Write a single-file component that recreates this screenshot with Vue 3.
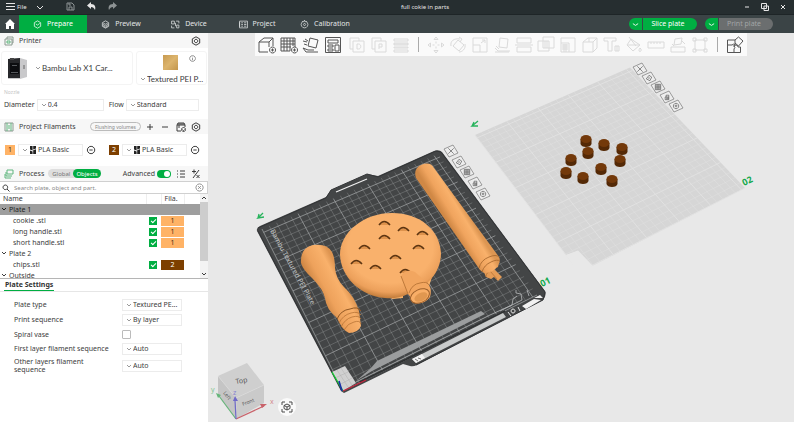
<script setup>
import { ref } from 'vue'

const tabs = [
  { name: 'Prepare', icon: 'M8 1.5l5.6 3.2v6.6L8 14.5l-5.6-3.2V4.7zM5 7l3 2 4-3' },
  { name: 'Preview', icon: 'M8 1.5l5.6 3.2v6.6L8 14.5l-5.6-3.2V4.7zM3 7.5l5 3 5-3M3 10l5 3 5-3M4 5.5l4 2 4-2' },
  { name: 'Device', icon: 'M1 2h5v5H1zM9 2h5v4M10 9h4v5h-4zM1 10v4h5M8 5v6' },
  { name: 'Project', icon: 'M1 2h14v12H1zM4 5h3M4 8h3M4 11h3M9 5h4M9 8h4M9 11h4M1 4v8' },
  { name: 'Calibration', icon: 'M8 2a6 6 0 1 0 .1 0zM8 6a2 2 0 1 0 .1 0zM8 0v2M4 2l1 2M12 2l-1 2' }
]
const activeTab = ref('Prepare')

const mainTools = [
  { name: 'Add', d: 'M1 6l5-4h9l-4 4zM1 6v10h9M11 6v5M15 2v8M14.500 11a3 3 0 1 0 .1 0zM14.500 12.500v3M13 14h3' },
  { name: 'Add plate', d: 'M1 2h14v9M1 2v13h9M1 5h14M1 8h14M1 11h10M4 2v13M7 2v13M10 2v13M13 2v8M14.500 11a3 3 0 1 0 .1 0zM14.500 12.500v3M13 14h3' },
  { name: 'Auto orient', d: 'M8 2l8 2-2 8-8-2zM1 5l4 1M2 8l3 1M1 12l3 4h12M1 12l5 2 6 0M3 3l3 2' },
  { name: 'Arrange', d: 'M1.500 1.500h15v15h-15zM4 4h10v3H4zM4 9h5v2H4zM4 13h5v2H4zM11 9h4v6h-4z' }
]
const splitTools = [
  { name: 'Split objects', d: 'M2 2h9v3M2 2v11h3M5 5h11v11H5zM9 8v5h1.500c3 0 3-5 0-5z' },
  { name: 'Split parts', d: 'M2 2h9v3M2 2v11h3M5 5h11v11H5zM9 13V8h3v3H9' },
  { name: 'Variable layer height', d: 'M2 3h14v2H2zM2 7h14v2H2zM2 8h14M2 11h14v1H2zM2 14h14v2H2z' }
]
const editTools = [
  { name: 'Move', d: 'M9 1l2 2.500H7zM9 17l-2-2.500h4zM1 9l2.500-2v4zM17 9l-2.500 2V7zM9 5.500v2M9 10.500v2M5.500 9h2M10.500 9h2' },
  { name: 'Rotate', d: 'M9 4l6 5-5 6-6-5zM2 10C1 5 5 2 11 3M10 1l3 2-2 3M16 8c1 5-3 8-6 8' },
  { name: 'Scale', d: 'M2 2h14v14H2zM2 9h7v7M10 7l4-3M11 4h3v3' },
  { name: 'Place on face', d: 'M7 2l8 1-1 9-8-1zM2 12l3 3h12M2 16h14M3 10l3 3' },
  { name: 'Cut', d: 'M2 2h14v5H2zM2 11h14v5H2zM0 9h18' },
  { name: 'Mesh boolean', d: 'M1 5h11v10H1zM6 1h11v11H6zM8 5v7M10 5v7' },
  { name: 'Fill', d: 'M2 2h14v14H2zM2 7h8v9M3 9h6M3 11h6M3 13h6M5 8v8M7 8v8' },
  { name: 'Seam painting', d: 'M2 6l5-4h9l-4 4zM2 6v10h10V6M16 2v10l-4 4M8 2v4' },
  { name: 'Text', d: 'M1 2h12v3H9v10H5V5H1zM12 10h4v5h-4zM14 10v5' },
  { name: 'Color painting', d: 'M6 3l9 6-7 6-6-6zM4 1l7 9M3 9h11M15 12c-3 4 2 5 1 1z' },
  { name: 'Measure', d: 'M1 6h16v6H1zM4 6v2M7 6v2M10 6v2M13 6v2' },
  { name: 'Support painting', d: 'M6 3l7-1-1 6-7 1zM2 11h14v5H2zM3 8l2 2M13 5l3 3' },
  { name: 'Assembly', d: 'M4 4h10v10H4zM2 2h3v3H2zM13 2h3v3h-3zM2 13h3v3H2zM13 13h3v3h-3z' }
]
const assembleTool = { name: 'Assembly view', d: 'M1.500 4H9v5a2 2 0 0 0-3 0H1.500zM1.500 9v7.500H8V13a2 2 0 0 0 0-3V9M8 16.500h6.500V11H12a2 2 0 0 0-4 0M12.500 1l4.500 4-4.500 5L9 7M12.500 1L9 4' }

const filaments = [
  { id: 1, color: '#ffb366', text: '#4a3018', name: 'PLA Basic' },
  { id: 2, color: '#7d3f00', text: '#ffffff', name: 'PLA Basic' }
]

const rows = ref([
  { label: 'Plate 1', group: true, selected: true },
  { label: 'cookie .stl', on: true, fil: 1 },
  { label: 'long handle.stl', on: true, fil: 1 },
  { label: 'short handle.stl', on: true, fil: 1 },
  { label: 'Plate 2', group: true },
  { label: 'chips.stl', on: true, fil: 2 },
  { label: 'Outside', group: true }
])
const advanced = ref(true)
const spiral = ref(false)

/* Maps the unit square onto a quad given as origin, x end, far corner, y end. */
function projector([p0, p1, p2, p3]) {
  const dx1 = p1[0] - p2[0], dx2 = p3[0] - p2[0], sx = p0[0] - p1[0] + p2[0] - p3[0]
  const dy1 = p1[1] - p2[1], dy2 = p3[1] - p2[1], sy = p0[1] - p1[1] + p2[1] - p3[1]
  const den = dx1 * dy2 - dx2 * dy1
  const g = (sx * dy2 - dx2 * sy) / den
  const h = (dx1 * sy - sx * dy1) / den
  const a = p1[0] - p0[0] + g * p1[0], b = p3[0] - p0[0] + h * p3[0]
  const d = p1[1] - p0[1] + g * p1[1], e = p3[1] - p0[1] + h * p3[1]
  return (u, v) => {
    const w = g * u + h * v + 1
    return ((a * u + b * v + p0[0]) / w).toFixed(2) + ' ' + ((d * u + e * v + p0[1]) / w).toFixed(2)
  }
}
const BED = 256
function gridPath(quad, bold) {
  const at = projector(quad)
  let path = ''
  for (let mm = 0; mm <= 250; mm += 10) {
    if ((mm % 50 === 0) !== bold) continue
    const t = mm / BED
    path += `M${at(t, 0)}L${at(t, 1)}M${at(0, t)}L${at(1, t)}`
  }
  return path
}
const quad1 = [[343, 391], [537, 295], [438, 154], [262, 229]]
const quad2 = [[579, 272], [745, 188], [630, 68], [475, 135]]
const grids = [
  { thin: gridPath(quad1, false), bold: gridPath(quad1, true) },
  { thin: gridPath(quad2, false), bold: gridPath(quad2, true) }
]
const holes = [[384, 224], [403, 230], [422, 234], [384, 238], [364, 248], [418, 248], [395, 258], [356, 263], [375, 268], [405, 272]]
const chips = [[586, 141], [604, 145], [622, 149], [588, 153], [571, 160], [620, 161], [601, 169], [566, 173], [583, 178], [612, 181]]
const glyphs = ['M-3-3L3 3M3-3L-3 3', 'M-3 1L0-3 3-1 1 3zM-1 0h2', 'M-3-3h6v6h-6zM-3-1h6M-3 1h6M-1-3v6M1-3v6', 'M-2 0h4v3h-4zM-1 0v-2h3v2M-1 1h3M-1 2h3', 'M0-3a3 3 0 1 0 .1 0zM0-1a1 1 0 1 0 .1 0z']
const spots = [
  [[451, 151], [459, 162], [467, 172], [475, 183], [483, 194]],
  [[640, 69], [649, 78], [658, 87], [667, 97], [676, 106]]
]
</script>

<template>
  <div class="app">
    <header class="titlebar">
      <div class="tb-left">
        <button class="file-btn"><svg class="i9" viewBox="0 0 9 9"><path d="M0 1.500h9M0 4.500h9M0 7.500h9" /></svg>File</button>
        <button aria-label="File menu"><svg class="i8" viewBox="0 0 8 8"><path d="M1 3l3 3 3-3" /></svg></button>
        <button class="save dim" aria-label="Save"><svg class="i9" viewBox="0 0 9 9"><path d="M1 1h5l2 2v5H1zM3 8V5h3v3M3 1v2h2" /></svg></button>
        <button aria-label="Undo"><svg class="i9 solid" viewBox="0 0 9 9"><path d="M0 3.500L4 0v2c4 0 5 3 4 6-1-2-2-3-4-3v2z" /></svg></button>
        <button class="dim" aria-label="Redo"><svg class="i9 solid" viewBox="0 0 9 9"><path d="M9 3.500L5 0v2C1 2 0 5 1 8c1-2 2-3 4-3v2z" /></svg></button>
      </div>
      <h1>full cokie in parts</h1>
      <div class="tb-right">
        <button aria-label="Minimize"><svg class="i8" viewBox="0 0 8 8"><path d="M2 4h4" /></svg></button>
        <button aria-label="Restore"><svg class="i8" viewBox="0 0 8 8"><path d="M.5.5h5v5h-5zM3 3h4.500v4.500H3z" /></svg></button>
        <button aria-label="Close"><svg class="i8" viewBox="0 0 8 8"><path d="M2 2l4 4M6 2L2 6" /></svg></button>
      </div>
    </header>

    <nav class="tabbar">
      <button class="home" aria-label="Home"><svg viewBox="0 0 10 10"><path d="M5 0l5 5H9v5H6V7H4v3H1V5H0z" /></svg></button>
      <button v-for="t in tabs" :key="t.name" class="tab" :class="{ active: t.name === activeTab }" @click="activeTab = t.name">
        <svg viewBox="0 0 16 16"><path :d="t.icon" /></svg>{{ t.name }}
      </button>
      <div class="actions">
        <div class="split">
          <button class="arrow" aria-label="Slice options"><svg viewBox="0 0 8 8"><path d="M1 3l3 2 3-2" /></svg></button>
          <button class="act">Slice plate</button>
        </div>
        <div class="split">
          <button class="arrow" aria-label="Print options"><svg viewBox="0 0 8 8"><path d="M1 3l3 2 3-2" /></svg></button>
          <button class="act off">Print plate</button>
        </div>
      </div>
    </nav>

    <div class="body">
      <aside class="side">
        <div class="head">
          <svg class="hi" viewBox="0 0 10 10"><path d="M1 3h7v6H1zM3 3V1h6v6H8" /><path class="g" d="M3 5h3v2H3z" /></svg>
          <h2>Printer</h2>
          <button class="push" aria-label="Printer settings"><svg class="gear" viewBox="0 0 10 10"><path d="M5 .8l3.700 2.100v4.200L5 9.200 1.300 7.100V2.900zM5 3.300a1.700 1.700 0 1 0 .1 0z" /></svg></button>
        </div>

        <div class="cards">
          <div class="card printer">
            <svg class="machine" viewBox="0 0 20 22">
              <path d="M1 2l12-1 7 2v17l-7 2H1z" fill="#c9c9cb" /><path d="M1 2l12-1v20H1z" fill="#27282b" />
              <path d="M3 6h9v11H3z" fill="#0c0d10" /><path d="M3 1h4v2H3z" fill="#444" /><path d="M4 15h7v1H4zM5 8h5v1H5z" fill="#55585c" /><path d="M17 8v4" stroke="#666" />
            </svg>
            <span class="sel"><svg viewBox="0 0 6 6"><path d="M1 2l2 2 2-2" /></svg><select class="big" aria-label="Printer"><option>Bambu Lab X1 Car...</option></select></span>
          </div>
          <div class="card bed">
            <div class="thumb"><span class="swatch"></span><svg viewBox="0 0 8 8"><path d="M4 .7a3.300 3.300 0 1 0 .1 0zM4 3.500V6M4 2v.7" /></svg></div>
            <span class="sel"><svg viewBox="0 0 6 6"><path d="M1 2l2 2 2-2" /></svg><select class="big" aria-label="Bed type"><option>Textured PEI P...</option></select></span>
          </div>
        </div>

        <fieldset class="nozzle">
          <legend>Nozzle</legend>
          <label for="dia">Diameter</label>
          <span class="sel box dia"><svg viewBox="0 0 6 6"><path d="M1 2l2 2 2-2" /></svg><select id="dia"><option>0.4</option></select></span>
          <label for="flow">Flow</label>
          <span class="sel box flow"><svg viewBox="0 0 6 6"><path d="M1 2l2 2 2-2" /></svg><select id="flow"><option>Standard</option></select></span>
        </fieldset>

        <div class="head">
          <svg class="hi" viewBox="0 0 10 10"><path d="M1 1h8v8H1z" /><path class="g" d="M3 1v8M5 3v4M7 1v8" /></svg>
          <h2>Project Filaments</h2>
          <button class="pill push">Flushing volumes</button>
          <button aria-label="Add filament"><svg class="pm" viewBox="0 0 8 8"><path d="M4 1v6M1 4h6" /></svg></button>
          <button aria-label="Remove filament"><svg class="pm" viewBox="0 0 8 8"><path d="M1 4h6" /></svg></button>
          <button aria-label="Sync filaments"><svg class="gear" viewBox="0 0 10 10"><path d="M1 3l1-2h6l1 2v2M1 3v6h4M1 3h8M3 1v2M5 1v2M7 1v2M3 3v3M7.500 5.500a2 2 0 1 0 .1 0zM6.500 7.500l1 1 1-1" /></svg></button>
          <button aria-label="Filament settings"><svg class="gear" viewBox="0 0 10 10"><path d="M5 .8l3.700 2.100v4.200L5 9.200 1.300 7.100V2.900zM5 3.300a1.700 1.700 0 1 0 .1 0z" /></svg></button>
        </div>
        <div class="filaments">
          <div v-for="f in filaments" :key="f.id" class="fil">
            <button class="chip" :style="{ background: f.color, color: f.text }">{{ f.id }}</button>
            <span class="sel box"><svg viewBox="0 0 6 6"><path d="M1 2l2 2 2-2" /></svg><svg class="logo" viewBox="0 0 6 8"><path d="M0 0h2.600v4.600L0 3.600zM3.200 0H6v2.400l-2.800 1zM0 4.400l2.600 1V8H0zM3.200 4.200L6 3.200V8H3.200z" /></svg><select :aria-label="'Filament ' + f.id"><option>{{ f.name }}</option></select></span>
            <button :aria-label="'Edit filament ' + f.id"><svg class="gear" viewBox="0 0 10 10"><path d="M5 1.300a3.700 3.700 0 1 0 .1 0zM3.300 5h3.400" /></svg></button>
          </div>
        </div>

        <div class="head">
          <svg class="hi" viewBox="0 0 10 10"><path class="g" d="M3 1h6v4H3zM2 3v4h6M1 5v4h6" /></svg>
          <h2>Process</h2>
          <div class="seg"><button>Global</button><button class="on">Objects</button></div>
          <label class="push" for="adv">Advanced</label>
          <input id="adv" v-model="advanced" class="toggle" type="checkbox">
          <button aria-label="List"><svg class="gear" viewBox="0 0 10 10"><path d="M1 2h1M4 2h5M1 5h1M4 5h5M1 8h1M4 8h5" /></svg></button>
          <button aria-label="Compare"><svg class="gear" viewBox="0 0 10 10"><path d="M1 2.500h4M3 .5v4M8 1L2 9M5.500 6l3 3M8.500 6l-3 3" /></svg></button>
        </div>

        <div class="search">
          <svg viewBox="0 0 8 8"><path d="M3.300 1a2.300 2.300 0 1 0 .1 0zM5 5l2.500 2.500" /></svg>
          <input type="text" aria-label="Search" placeholder="Search plate, object and part.">
          <button aria-label="Clear"><svg viewBox="0 0 10 10"><path d="M5 1a4 4 0 1 0 .1 0zM3.500 3.500l3 3M6.500 3.500l-3 3" /></svg></button>
        </div>

        <div class="tree">
          <table>
            <thead><tr><th>Name</th><th class="c-on"></th><th class="c-fil">Fila.</th><th class="c-end"></th></tr></thead>
            <tbody>
              <tr v-for="r in rows" :key="r.label" :class="{ picked: r.selected }">
                <td :class="r.group ? 'grp' : 'leaf'"><svg v-if="r.group" viewBox="0 0 6 6"><path d="M1 2l2 2 2-2" /></svg>{{ r.label }}</td>
                <td><input v-if="r.fil" v-model="r.on" type="checkbox" class="tick" :aria-label="'Print ' + r.label"></td>
                <td><span v-if="r.fil" class="tag" :style="{ background: filaments[r.fil - 1].color, color: filaments[r.fil - 1].text }">{{ r.fil }}</span></td>
                <td></td>
              </tr>
            </tbody>
          </table>
          <div class="scroll">
            <svg viewBox="0 0 8 8"><path d="M2 5l2-2 2 2" /></svg>
            <div class="thumb-bar"></div>
            <svg viewBox="0 0 8 8"><path d="M2 3l2 2 2-2" /></svg>
          </div>
        </div>

        <div class="ptabs"><h3>Plate Settings</h3></div>
        <form class="form" @submit.prevent>
          <label for="pt">Plate type</label>
          <span class="sel box"><svg viewBox="0 0 6 6"><path d="M1 2l2 2 2-2" /></svg><select id="pt"><option>Textured PE...</option></select></span>
          <label for="ps">Print sequence</label>
          <span class="sel box"><svg viewBox="0 0 6 6"><path d="M1 2l2 2 2-2" /></svg><select id="ps"><option>By layer</option></select></span>
          <label for="sv">Spiral vase</label>
          <input id="sv" v-model="spiral" type="checkbox" class="plain">
          <label for="fl">First layer filament sequence</label>
          <span class="sel box"><svg viewBox="0 0 6 6"><path d="M1 2l2 2 2-2" /></svg><select id="fl"><option>Auto</option></select></span>
          <label for="ol">Other layers filament sequence</label>
          <span class="sel box"><svg viewBox="0 0 6 6"><path d="M1 2l2 2 2-2" /></svg><select id="ol"><option>Auto</option></select></span>
        </form>
      </aside>

      <main class="view">
        <svg class="scene" viewBox="208 33 586 389" preserveAspectRatio="xMidYMid slice">
          <defs>
            <linearGradient id="rod" gradientUnits="userSpaceOnUse" x1="448" y1="222" x2="466" y2="211">
              <stop offset="0" stop-color="#d08845" /><stop offset=".35" stop-color="#f0a45e" /><stop offset=".75" stop-color="#f9b16b" /><stop offset="1" stop-color="#dd9652" />
            </linearGradient>
            <linearGradient id="knob" gradientUnits="userSpaceOnUse" x1="314" y1="296" x2="344" y2="280">
              <stop offset="0" stop-color="#c07a3a" /><stop offset=".4" stop-color="#eea25c" /><stop offset=".8" stop-color="#f9b16b" /><stop offset="1" stop-color="#dd9450" />
            </linearGradient>
            <radialGradient id="disc" cx=".5" cy=".4" r=".6">
              <stop offset=".7" stop-color="#f9b16c" /><stop offset=".88" stop-color="#eca05b" /><stop offset="1" stop-color="#bf7a39" />
            </radialGradient>
          </defs>

          <!-- empty plate -->
          <path fill="#d6d6d6" d="M475 135L630 67.500 745 188 592 266 578 251 566 255z" />
          <g fill="none" stroke="#e2e2e2"><path :d="grids[1].thin" stroke-width=".4" /><path :d="grids[1].bold" stroke-width=".9" /></g>
          <path fill="#e8e8e8" d="M566 255L578 250.500 593 266 579 274z" />

          <!-- active plate -->
          <path fill="#434546" d="M257 231Q256 228 260 226L326 197 331 190 367 174 378 176 434 151Q439 149 442 152L545 291Q547 295 543 300L417 365Q413 367 410 366L403 364 344 393 341 391z" />
          <path fill="none" stroke="#333537" stroke-width="1" d="M258 231L342 391M258 228L326 198 331 190 367 174 378 177 436 151 441 152 545 292 543 300 416 365" />
          <path fill="none" stroke="#f1f1f1" stroke-width="1.200" d="M336 192L367 179" />
          <g fill="none" stroke="#a4a7a8"><path :d="grids[0].thin" stroke-width=".45" opacity=".75" /><path :d="grids[0].bold" stroke-width=".9" opacity=".8" /></g>
          <path fill="#9b9d9e" d="M356 381L371 368 377 361 481 311 485 314 372 371z" />
          <path fill="none" stroke="#b9bbbc" stroke-width=".8" d="M356 382L490 315 512 305 513 299 517 296M500 311L522 300 521 294 516 293 516 290M527 290L529 296" />
          <path fill="none" stroke="#2f3132" stroke-width="1.500" d="M360 382L505 311" />
          <path fill="#c9cbcb" d="M412 359L503 313 506 317 416 363z" />
          <path fill="#f2f2f2" d="M412 359L422 354 425 358 416 363zM522 306L534 299 541 300 526 309zM534 298L540 295 543 298z" />
          <path fill="none" stroke="#555" stroke-width=".8" d="M415 359l3 2M418 358l3 1" />
          <path fill="none" stroke="#e8e8e8" stroke-width="1" d="M508 312l3 4M513 309a2 2 0 1 0 .1 0M518 307l2 4" />
          <path fill="#dcdcdc" d="M332 372L345 366 356 383 343 391z" opacity=".92" />
          <path fill="none" stroke="#b5b5b5" stroke-width=".6" d="M337 370l11 17M341 368l11 17M335 378l13-6M339 385l13-7" />
          <path fill="none" stroke="#14c832" stroke-width="1.300" d="M343 391L332 372" /><path fill="none" stroke="#c4243c" stroke-width="1.300" d="M343 391L366 380" /><path fill="none" stroke="#1b2fa8" stroke-width="1.600" d="M342 391L339 381" />
          <text class="bedtext" transform="translate(270 231) rotate(61)">Bambu Textured PEI Plate</text>

          <!-- long handle -->
          <path fill="#e59c57" d="M483 270L499 262 498 267 494 269 502 277 498 281 494 277 491 279 486 277z" />
          <path fill="none" stroke="#b87436" stroke-width=".8" d="M490 271l7 8M486 277q0-5 6-7" />
          <path fill="url(#rod)" d="M416 178Q413 169 421 165 430 161 434 168L499 257Q501 261 498 265 494 273 484 273L480 270z" />
          <path fill="none" stroke="#a96a30" stroke-width=".9" d="M479 268Q481 260 489 257 496 254 499 257M482 272Q484 265 491 262 497 259 500 261" />
          <!-- short handle -->
          <path fill="url(#knob)" d="M301 263Q300 248 313 245 327 243 332 252 335 258 335 268 336 279 344 287 355 297 359 311L361 326Q358 333 349 333 342 330 337 318 326 309 325 298 323 289 312 278 303 270 301 263z" />
          <path fill="none" stroke="#8f5623" stroke-width="1" d="M337 319Q341 310 350 309 358 306 361 311" />
          <path fill="none" stroke="#b87436" stroke-width=".8" d="M339 323Q343 315 351 313 358 311 361 315M341 327Q345 319 352 317 359 315 361 319M344 330Q348 323 354 322 360 320 361 324" />
          <!-- cookie -->
          <path fill="#f7b068" d="M390 296l13-1v3l-11 1zM426 281l5-9 2 2-4 12z" />
          <path fill="url(#disc)" d="M340 255C340 232 364 213 392 213 420 213 440 230 441 253 441 272 428 287 408 294 400 298 392 299 385 298 360 296 341 277 340 255z" />
          <g fill="#dd924c" stroke="#5c3512" stroke-width="1.500"><path v-for="(h, i) in holes" :key="i" :d="`M${h[0] - 5} ${h[1] + 1}q5 -7 11 0`" /></g>
          <path fill="#f2a660" d="M401 276Q406 268 415 272L429 285Q432 290 430 297 424 305 415 303L408 294z" />
          <path fill="none" stroke="#b87436" stroke-width=".9" d="M401 276L408 294M409 293Q412 284 420 283 427 281 429 285" />
          <ellipse cx="420" cy="296" rx="10" ry="6.500" fill="#f8ae67" stroke="#9c5f2a" stroke-width="1" transform="rotate(-25 420 296)" />
          <ellipse cx="421" cy="297" rx="7" ry="4" fill="#e09750" transform="rotate(-25 421 297)" />

          <!-- chips -->
          <g v-for="(c, i) in chips" :key="'c' + i">
            <path fill="#542906" :d="`M${c[0] - 5.5} ${c[1] - 2}v5q1 3 5.500 3t5.500 -3v-5z`" />
            <ellipse :cx="c[0]" :cy="c[1] - 2" rx="5.500" ry="4" fill="#73390a" />
          </g>

          <!-- plate controls -->
          <template v-for="(set, s) in spots" :key="'s' + s">
            <g v-for="(p, i) in set" :key="i" :transform="`translate(${p[0]} ${p[1]})`" fill="none" stroke="#777" stroke-width=".7">
              <path d="M-7 -2L2 -6 7 2 -2 6z" fill="#ededed" />
              <path :d="glyphs[i]" stroke="#4d4d4d" transform="scale(.9)" />
            </g>
          </template>
          <text class="num" transform="translate(542 287) rotate(-26)">01</text>
          <text class="num" transform="translate(744 186) rotate(-26)">02</text>
          <path fill="none" stroke="#27b35c" stroke-width="1.300" d="M263 213L258 218 264 217M258 218L259 214M478 121L472 126 478 126M472 126L474 122" />

          <!-- view cube -->
          <path fill="#cfcfcf" d="M218 376L247 363 264 385 236 398z" /><path fill="#c5c5c5" d="M218 376L236 398V419L218 395z" /><path fill="#cacaca" d="M236 398L264 385V403L236 419z" />
          <path fill="none" stroke="#dedede" stroke-width=".6" d="M218 376L236 398 264 385M236 398V419" />
          <g fill="none" stroke-width="1.200"><path stroke="#66b57a" d="M236 419L219 396" /><path stroke="#c9636b" d="M236 419L264 406" /><path stroke="#6f69c8" d="M236 419L235 400" /></g>
          <path fill="#66b57a" d="M216 393l5 2-3 3z" /><path fill="#c9636b" d="M267 404l-5 4-2-4z" /><path fill="#6f69c8" d="M235 396l3 5h-5z" />
          <text class="cube" transform="translate(236 384) rotate(-10)">Top</text>
          <text class="cube sm" transform="translate(243 406) rotate(-22)">Front</text>
          <text class="cube sm" transform="translate(223 393) rotate(52)">Left</text>
          <text class="ax" x="211" y="392" fill="#7fc490">y</text><text class="ax" x="270" y="404" fill="#d48a90">x</text><text class="ax" x="233" y="395" fill="#8a85d0">z</text>
          <circle cx="287" cy="407" r="9" fill="#fafafa" />
          <path fill="none" stroke="#4a4a4a" stroke-width="1" d="M282 405v-3h3M289 402h3v3M292 409v3h-3M285 412h-3v-3M287 404l3 1.500v3l-3 1.500-3-1.500v-3zM284 405.500l3 1.500 3-1.500M287 407v3" />
        </svg>

        <div class="tools">
          <button v-for="t in mainTools" :key="t.name" :aria-label="t.name"><svg viewBox="0 0 18 18"><path :d="t.d" /></svg></button>
          <div class="muted">
            <button v-for="t in splitTools" :key="t.name" :aria-label="t.name"><svg viewBox="0 0 18 18"><path :d="t.d" /></svg></button>
          </div>
          <i class="bar"></i>
          <div class="muted flat">
            <button v-for="t in editTools" :key="t.name" :aria-label="t.name"><svg viewBox="0 0 18 18"><path :d="t.d" /></svg></button>
          </div>
          <i class="bar"></i>
          <button :aria-label="assembleTool.name"><svg viewBox="0 0 18 18"><path :d="assembleTool.d" /></svg></button>
        </div>
      </main>
    </div>
  </div>
</template>

<style>
body { margin: 0; }
</style>

<style scoped>
.app { display: flex; flex-direction: column; min-height: 100vh; font: 7px/10px "Noto Sans", "Open Sans", sans-serif; color: #3c3c3c; background: #e8e8e8; }
.app * { box-sizing: border-box; }
button, input, select { font: inherit; color: inherit; background: none; border: 0; padding: 0; margin: 0; }
button { display: inline-flex; align-items: center; justify-content: center; }
svg { flex: none; fill: none; stroke: currentColor; }
h1, h2, h3 { margin: 0; font-size: 7px; font-weight: 400; }

.titlebar { display: flex; align-items: center; height: 15px; padding-bottom: 1px; background: #262e30; border-bottom: 1px solid #1e2527; color: #e6e6e6; }
.titlebar h1 { flex: 1; text-align: center; font-size: 6px; }
.tb-left { display: flex; align-items: center; width: 118px; padding-left: 6px; gap: 12px; }
.file-btn { gap: 2px; font-size: 6px; }
.i9 { width: 9px; height: 9px; }
.i8 { width: 8px; height: 8px; }
.file-btn + button { margin-left: -3px; }
.solid { fill: currentColor; stroke: none; }
.dim { color: #8d9394; }
.save { margin-left: 10px; }
.tb-right { display: flex; gap: 10px; width: 62px; padding-left: 11px; }
.tb-left, .tb-right { flex: none; }

.tabbar { display: flex; height: 18px; background: #3b4446; color: #e4e6e6; }
.tabbar svg { width: 9px; height: 9px; }
.home { width: 19px; }
.home svg { width: 10px; height: 10px; fill: #fff; stroke: none; }
.tab { width: 68px; gap: 5px; stroke-width: 1.3; }
.tab.active { background: #00ae42; color: #fff; }
.actions { display: flex; align-items: center; gap: 8px; margin-left: auto; padding-right: 21px; }
.split { display: flex; width: 68px; height: 12px; border-radius: 6px; overflow: hidden; gap: 1px; color: #fff; }
.arrow { width: 13px; background: #00ae42; }
.tabbar .arrow svg { width: 7px; height: 7px; }
.act { flex: 1; background: #00ae42; padding-right: 4px; }
.act.off { background: #6b6e6f; color: #a2a5a6; }

.body { display: flex; flex: 1; }
.side { flex: none; width: 209px; background: #fff; border-right: 1px solid #eee; }
.head { display: flex; align-items: center; gap: 5px; height: 15px; padding: 0 7px 0 4px; background: #f7f7f7; }
.hi { width: 10px; height: 10px; color: #8b9a90; }
.g { stroke: #5fb57c; }
.push { margin-left: auto; }
.gear { width: 10px; height: 10px; }
.pm { width: 8px; height: 8px; margin-right: 2px; }

.cards { display: flex; gap: 3px; padding: 3px 1px; }
.card { height: 34px; border: 1px solid #f4f4f4; border-radius: 3px; }
.printer { flex: 1; display: flex; align-items: center; gap: 8px; padding-left: 5px; }
.machine { width: 20px; height: 22px; stroke: none; }
.bed { width: 71px; display: flex; flex-direction: column; justify-content: space-between; padding: 3px 0 0 3px; }
.thumb { display: flex; gap: 11px; padding-left: 23px; }
.thumb svg { width: 7px; height: 7px; color: #888; }
.swatch { width: 15px; height: 15px; background: linear-gradient(135deg, #c79a50, #dcb46d, #c3964c); }

.sel { display: flex; align-items: center; min-width: 0; }
.sel svg { width: 6px; height: 6px; color: #999; margin-right: 1px; }
.sel select { flex: 1; min-width: 0; height: 11px; appearance: none; line-height: 10px; }
.sel .big { font-family: Lato, "Noto Sans", sans-serif; font-size: 8px; }
.box { height: 12px; padding-left: 3px; border: 1px solid #ececec; }
.printer .sel { flex: 1; }

.nozzle { display: flex; align-items: center; margin: 0; border: 0; padding: 3px 9px 8px 4px; }
.nozzle legend { padding: 0; height: 8px; font-size: 5px; line-height: 8px; color: #c4c4c4; }
.dia { width: 67px; margin: 0 5px 0 2px; }
.flow { flex: 1; margin-left: 2px; }

.pill { height: 9px; padding: 0 4px; border: 1px solid #bbb; border-radius: 5px; font-size: 5px; color: #888; }
.filaments { display: flex; gap: 13px; padding: 10px 8px 10px 5px; }
.fil { flex: 1; display: flex; align-items: center; gap: 3px; }
.chip { width: 10px; height: 10px; font-size: 7px; }
.fil .sel { flex: 1; }
.fil .sel .logo { width: 6px; height: 8px; margin: 0 2px 0 1px; fill: #222; stroke: none; }
.seg { display: flex; height: 9px; margin-left: -1px; border-radius: 5px; background: #dedede; color: #777; font-size: 6px; }
.seg button { padding: 0 3px 0 4px; }
.seg .on { padding: 0 3px; border-radius: 5px; background: #00ae42; color: #fff; }
.toggle { appearance: none; width: 14px; height: 8px; margin-left: -3px; padding: 1px; border-radius: 4px; background: #ccc; display: flex; }
.toggle::before { content: ""; width: 6px; height: 6px; border-radius: 3px; background: #fff; }
.toggle:checked { background: #00ae42; justify-content: flex-end; }

.search { display: flex; align-items: center; gap: 4px; height: 13px; padding: 0 3px 0 2px; border: 1px solid #d0d0d0; border-left: 0; }
.search svg { width: 8px; height: 8px; }
.search button svg { width: 9px; height: 9px; color: #888; }
.search input { flex: 1; min-width: 0; outline: 0; font-size: 6px; }
.search input::placeholder { color: #8a8a8a; opacity: 1; }

.tree { display: flex; height: 85px; overflow: hidden; border-bottom: 1px solid #b5b5b5; }
table { flex: 1; align-self: flex-start; border-collapse: collapse; table-layout: fixed; }
tr { height: 11px; }
th, td { padding: 0; height: 11px; line-height: 10px; font-weight: 400; text-align: left; white-space: nowrap; }
thead tr { height: 10px; }
th { height: 10px; padding-left: 3px; border-right: 1px solid #eee; }
.c-on { width: 15px; }
.c-fil { width: 23px; }
.c-end { width: 16px; border: 0; }
td.leaf { padding-left: 13px; }
td.grp svg { width: 6px; height: 6px; margin: 0 2px 0 1px; }
.picked { background: #9e9e9e; color: #222; }
.tick { appearance: none; display: block; width: 8px; height: 8px; margin-left: 3px; border: 1px solid #bbb; }
.tick:checked { border-color: #00ae42; background: #00ae42; display: grid; place-items: center; }
.tick:checked::before { content: ""; width: 4px; height: 2px; border: solid #fff; border-width: 0 0 1px 1px; transform: rotate(-45deg); }
.tag { display: block; height: 10px; line-height: 10px; text-align: center; }
.scroll { width: 8px; display: flex; flex-direction: column; background: #f3f3f3; }
.scroll svg { width: 8px; height: 8px; }
.thumb-bar { flex: 1; margin-bottom: 9px; background: #cdcdcd; }

.ptabs { display: flex; padding-left: 4px; border-bottom: 1px solid #e6e6e6; }
.ptabs h3 { padding: 1px 1px 0; font-weight: 700; border-bottom: 1px solid #00ae42; color: #333; }
.form { display: grid; grid-template-columns: 1fr 60px; align-items: center; gap: 3px 9px; padding: 7px 26px 8px 14px; line-height: 8px; }
.form label { min-height: 11px; display: flex; align-items: center; }
.form .plain { appearance: none; width: 9px; height: 9px; border: 1px solid #bbb; border-radius: 1px; }

.view { flex: 1; min-width: 0; display: grid; margin-left: -1px; background: #e8e8e8; }
.view > * { grid-area: 1 / 1; }
.scene { width: 100%; height: 100%; min-height: 380px; stroke: none; }
.scene text { stroke: none; }
.bedtext { font-size: 7px; fill: #c4c6c6; }
.num { font-size: 9px; font-weight: 700; fill: #12a84a; }
.cube { font-size: 7px; fill: #555; }
.sm { font-size: 5px; }
.ax { font-size: 7px; }
.tools { justify-self: center; align-self: start; display: flex; height: 23px; padding: 0 1px; background: #fafafa; color: #555; }
.tools button { width: 22px; height: 23px; }
.tools svg { width: 18px; height: 18px; stroke-width: 1; }
.muted { display: flex; margin-left: 2px; color: #dadada; }
.flat { margin-left: 0; }
.bar { width: 1px; height: 15px; margin: 4px 6px; background: #aaa; }
</style>
